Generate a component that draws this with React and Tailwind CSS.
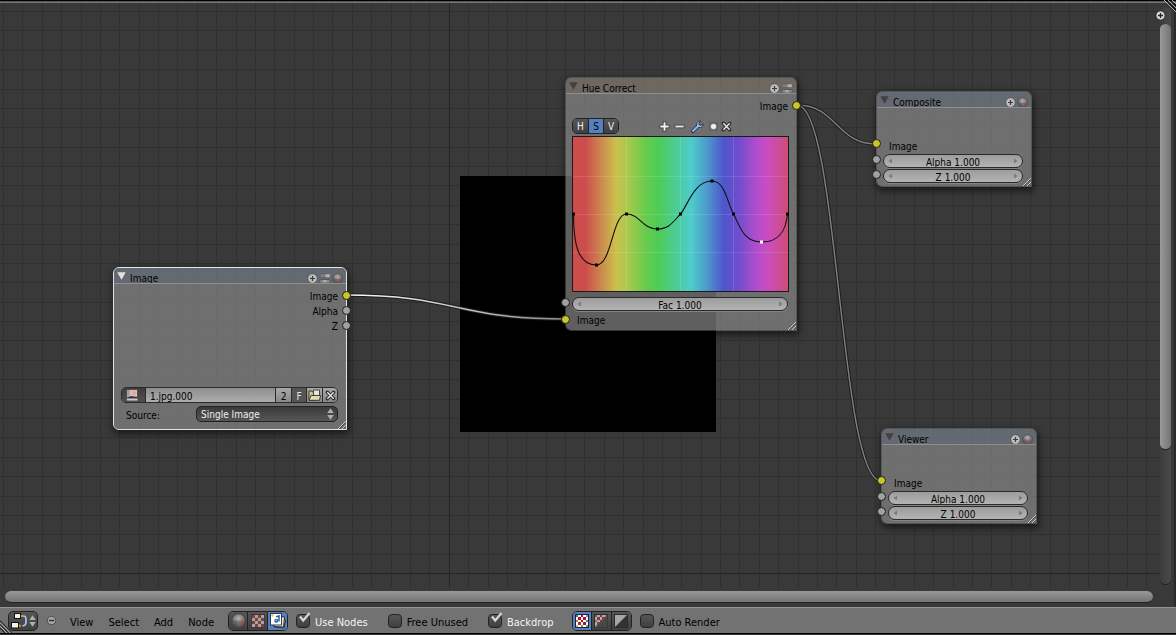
import React, { useState } from 'react';

const STEP = 19.38;

const range = (n) => Array.from({ length: n }, (_, i) => i);

// Background grid of the node canvas
function CanvasGrid() {
  return (
    <svg className="absolute inset-0 w-full h-full" shapeRendering="crispEdges" aria-hidden="true">
      {range(160).map((i) => {
        const x = Math.round(3 + i * STEP);
        return <rect key={i} x={x} y="0" width="1" height="100%" fill={i === 23 ? '#252525' : '#303030'} />;
      })}
      {range(100).map((i) => {
        const y = Math.round(8 + i * STEP);
        return <rect key={i} x="0" y={y} width="100%" height="1" fill={i === 29 ? '#252525' : '#303030'} />;
      })}
    </svg>
  );
}

// Noodle between two sockets
function Link({ from, to, light }) {
  const half = (to[0] - from[0]) / 2;
  const d = `M${from[0]} ${from[1]} C${from[0] + half} ${from[1]} ${to[0] - half} ${to[1]} ${to[0]} ${to[1]}`;
  return (
    <g fill="none">
      <path d={d} stroke="#1c1c1c" strokeWidth="3.4" />
      <path d={d} stroke={light ? 'url(#noodle)' : '#808080'} strokeWidth="1.4" />
    </g>
  );
}

function Links() {
  return (
    <svg className="absolute inset-0 w-full h-full" aria-hidden="true">
      <defs>
        <linearGradient id="noodle">
          <stop offset="0" stopColor="#ffffff" />
          <stop offset="1" stopColor="#8c8c8c" />
        </linearGradient>
      </defs>
      <Link from={[346, 292]} to={[565, 316]} light />
      <Link from={[797, 102]} to={[876, 141]} />
      <Link from={[797, 102]} to={[881, 478]} />
    </svg>
  );
}

/* ---------- icons ---------- */

function PlusCircle() {
  return (
    <svg width="11" height="11" viewBox="0 0 11 11">
      <circle cx="5.5" cy="5.5" r="4.8" fill="#bdbdbd" stroke="#4a4a4a" strokeWidth="0.8" />
      <path d="M5.5 3v5M3 5.5h5" stroke="#3a3a3a" strokeWidth="1.2" />
    </svg>
  );
}

function OptionsIcon() {
  return (
    <svg width="12" height="11" viewBox="0 0 12 11">
      <rect x="1" y="1" width="10" height="3.500" rx="1" fill="#7e7e7e" stroke="#5a5a5a" strokeWidth="0.600" />
      <rect x="6.500" y="1.300" width="4.500" height="3" rx="1" fill="#b0b0b0" />
      <rect x="1" y="6.500" width="10" height="3.500" rx="1" fill="#a8a8a8" stroke="#444" strokeWidth="0.700" />
      <path d="M3 7v2.600M9 7v2.600" stroke="#5c5c5c" />
    </svg>
  );
}

function MaterialBall({ size = 11 }) {
  return (
    <svg width={size} height={size} viewBox="0 0 11 11">
      <defs>
        <radialGradient id="ball" cx="0.5" cy="0.35" r="0.65">
          <stop offset="0" stopColor="#b5b0b0" />
          <stop offset="0.6" stopColor="#7d7878" />
          <stop offset="1" stopColor="#585454" />
        </radialGradient>
      </defs>
      <circle cx="5.5" cy="5.5" r="4.9" fill="url(#ball)" stroke="#464646" strokeWidth="0.7" />
      <path d="M5.800 5.800 10 5.300A4.500 4.500 0 0 1 6.300 9.900Z" fill="#8c4f48" opacity="0.6" />
      <path d="M1 5.200 5.400 5.800 5.200 9.900A4.500 4.500 0 0 1 1 5.200Z" fill="#4d4d4d" opacity="0.5" />
    </svg>
  );
}

function TextureIcon() {
  return (
    <svg width="14" height="14" viewBox="0 0 14 14" shapeRendering="crispEdges">
      <rect width="14" height="14" fill="#3f3a3a" />
      <rect x="1" y="1" width="12" height="12" fill="#aaa3a0" />
      {range(16).map((i) => {
        const col = i % 4;
        const row = Math.floor(i / 4);
        return (col + row) % 2 === 0 ? (
          <rect key={i} x={1 + col * 3} y={1 + row * 3} width="3" height="3" fill="#7b4340" />
        ) : null;
      })}
    </svg>
  );
}

function CompositingIcon() {
  return (
    <svg width="18" height="18" viewBox="0 0 18 18">
      <path d="M7 6.500l9.500 1.500-1.500 8-9.500-1z" fill="#cfcbb4" stroke="#222" strokeWidth="0.9" />
      <path d="M5 4l10.500 1-1 10-9.500-0.500z" fill="#e8e5d2" stroke="#222" strokeWidth="0.9" />
      <rect x="1.500" y="1.500" width="11" height="11.500" fill="#fff" stroke="#1d2a44" strokeWidth="0.9" />
      <circle cx="3.500" cy="3.500" r="1.300" fill="#f5c234" />
      <path d="M10 3v6.500M7 4.500h3" stroke="#2b5ca8" strokeWidth="1.500" fill="none" />
      <circle cx="7.300" cy="8.800" r="2" fill="#2b5ca8" />
      <circle cx="7.300" cy="8.500" r="0.800" fill="#b7d0f5" />
    </svg>
  );
}

function NodeEditorIcon() {
  return (
    <svg width="18" height="17" viewBox="0 0 18 17">
      <path d="M9 4.500h1.500M8 14h2" stroke="#e08a1c" strokeWidth="1.500" />
      <path d="M11 4h1.500q2.500 0 2.500 3v3q0 3.500-3.500 4" fill="none" stroke="#a6c3ee" strokeWidth="1.700" />
      <rect x="3.500" y="1.500" width="6" height="5" fill="#f4f2e8" stroke="#111" />
      <rect x="0.500" y="10.500" width="7" height="5.500" fill="#f4f2e8" stroke="#111" />
      <circle cx="10.800" cy="4" r="1.100" fill="#e9941f" />
      <circle cx="8.800" cy="13.500" r="1.100" fill="#e9941f" />
    </svg>
  );
}

const CHECKS = [
  ['#2f7f96', '#ffffff', '#b01030', '#ffffff', '#8f8fa0'],
  ['#ffffff', '#b01030', '#ffffff', '#b01030', '#ffffff'],
  ['#c9780c', '#ffffff', '#b01030', '#ffffff', '#3d8f8a'],
  ['#ffffff', '#a02848', '#ffffff', '#8c1f3c', '#ffffff'],
  ['#e0b070', '#ffffff', '#b08040', '#ffffff', '#86a818'],
];

// Channel icons: full colour+alpha, colour with diagonal mask, alpha only
function ChannelIcon({ kind }) {
  return (
    <svg width="14" height="14" viewBox="0 0 14 14">
      <rect width="14" height="14" fill={kind === 'rgba' ? '#15243f' : '#2c2c2c'} />
      {kind === 'alpha' ? (
        <>
          <rect x="1" y="1" width="12" height="12" fill="#a6a6a6" />
          <path d="M13 1v12H1z" fill="#333333" />
        </>
      ) : (
        <g shapeRendering="crispEdges">
          <rect x="1" y="1" width="12" height="12" fill="#fff" />
          {CHECKS.map((row, r) =>
            row.map((c, i) => (
              <rect
                key={`${r}-${i}`}
                x={[1, 3, 6, 8, 11][i]}
                y={[1, 3, 6, 8, 11][r]}
                width={i % 2 ? 3 : 2}
                height={r % 2 ? 3 : 2}
                fill={c}
              />
            ))
          )}
        </g>
      )}
      {kind === 'rgb' && (
        <>
          <rect x="1" y="1" width="12" height="12" fill="#606060" opacity="0.5" />
          <path d="M13.500 1v12.500H1z" fill="#484848" />
        </>
      )}
    </svg>
  );
}

function UpDown() {
  return (
    <svg width="7" height="12" viewBox="0 0 7 12">
      <path d="M3.500 0.300 6.700 5H0.300zM3.500 11.700 6.700 7H0.300z" fill="#b0b0b0" />
    </svg>
  );
}

function ImageIcon() {
  return (
    <svg width="12" height="12" viewBox="0 0 12 12">
      <rect x="0.500" y="0.500" width="11" height="11" fill="#d5c0bd" stroke="#3a3a3a" strokeWidth="0.700" />
      <path d="M1 1h3v5.500L1 8z" fill="#a59da3" />
      <circle cx="8" cy="4" r="2.200" fill="#e7a596" />
      <path d="M1 8.500 5 7l6.500 1v2H1z" fill="#3d3336" />
      <path d="M1 9.500h10.500v2H1z" fill="#c5c9dc" />
    </svg>
  );
}

function FolderIcon() {
  return (
    <svg width="13" height="12" viewBox="0 0 13 12">
      <path d="M1 11V2h3l1 1.500h2V11z" fill="#cfc690" stroke="#2f2f2f" strokeWidth="0.900" />
      <path d="M5.500 1h6v6h-6z" fill="#e6e6dd" stroke="#3a3a3a" strokeWidth="0.900" />
      <path d="M1 11.300 3 6.500h9.500l-1 4.800z" fill="#e3dcae" stroke="#2f2f2f" strokeWidth="0.900" />
    </svg>
  );
}

function CrossIcon() {
  return (
    <svg width="11" height="11" viewBox="0 0 12 12">
      <path d="M2.500 2.500l7 7M9.500 2.500l-7 7" stroke="#2b2b2b" strokeWidth="3.600" strokeLinecap="round" />
      <path d="M2.500 2.500l7 7M9.500 2.500l-7 7" stroke="#e6e6e6" strokeWidth="1.600" />
    </svg>
  );
}

function AddIcon() {
  return (
    <svg width="11" height="11" viewBox="0 0 11 11">
      <path d="M5.500 0.500v10M0.500 5.500h10" stroke="#3a3a3a" strokeWidth="3.600" />
      <path d="M5.500 1.300v8.400M1.300 5.500h8.400" stroke="#f0f0f0" strokeWidth="1.900" />
    </svg>
  );
}

function RemoveIcon() {
  return (
    <svg width="11" height="11" viewBox="0 0 11 11">
      <path d="M0.500 5.500h10" stroke="#444" strokeWidth="3.600" />
      <path d="M1.300 5.500h8.400" stroke="#e6e6e6" strokeWidth="1.900" />
    </svg>
  );
}

function WrenchIcon() {
  return (
    <svg width="13" height="13" viewBox="0 0 13 13">
      <path d="M1.800 11.200 7.500 5.500" stroke="#1f2d47" strokeWidth="3.600" strokeLinecap="round" />
      <path d="M9.800 1.200a3.200 3.200 0 1 0 2.300 2.600L10 5.500 7.800 4.600 8 2.600z" fill="#c5d6f2" stroke="#1f2d47" strokeWidth="0.900" />
      <path d="M2 11 7.300 5.700" stroke="#8fb4ec" strokeWidth="2.100" strokeLinecap="round" />
    </svg>
  );
}

function DotIcon() {
  return (
    <svg width="11" height="11" viewBox="0 0 11 11">
      <rect x="1.500" y="1.500" width="8" height="8" fill="none" stroke="#5c5c5c" strokeWidth="0.800" />
      <circle cx="5.500" cy="5.500" r="3.100" fill="#f0f0f0" stroke="#4a4a4a" strokeWidth="0.600" />
    </svg>
  );
}

/* ---------- node parts ---------- */

function Socket({ color = 'grey', side = 'left', field }) {
  return (
    <span
      className={`absolute size-[9px] rounded-full border border-[#1c1c1c] ${field ? 'top-[1px]' : 'top-[3px]'} ${
        side === 'left' ? '-left-[5px]' : '-right-[5px]'
      } ${color === 'yellow' ? 'bg-[#c7c729]' : 'bg-[#a1a1a1]'}`}
    />
  );
}

function Node({ title, className, header, selected, icons, children }) {
  return (
    <section
      aria-label={title}
      className={`absolute flex flex-col rounded-t-md rounded-bl-md border text-[10px] shadow-[1px_3px_7px_1px_rgba(0,0,0,0.55)] ${
        selected ? 'border-[#e4e4e4]' : 'border-[#83838366]'
      } ${className}`}
    >
      <header className={`flex h-[15px] items-center rounded-t-[5px] pl-[3px] pr-[3px] pt-[5px] ${header}`}>
        <button type="button" aria-label="Collapse" className="-mt-1 mr-1">
          <svg width="9" height="8" viewBox="0 0 9 8">
            <path d="M0.300 0.300h8.400L4.500 7.700z" fill={selected ? '#e2e2e2' : '#414141'} />
          </svg>
        </button>
        <h2 className="flex-1">{title}</h2>
        <div className="flex gap-[1px]">{icons}</div>
      </header>
      <div className="relative flex flex-1 flex-col rounded-bl-[5px] border-t border-[#8d8f92] bg-[#848484b8]">
        {children}
        <svg width="9" height="9" viewBox="0 0 9 9" className="absolute bottom-0 right-0" aria-hidden="true">
          <path d="M1 9 9 1M5 9 9 5" stroke="#cfcfcf" strokeWidth="1" />
          <path d="M2.200 9 9 2.200M6.200 9 9 6.200" stroke="#3d3d3d" strokeWidth="0.700" />
        </svg>
      </div>
    </section>
  );
}

// Number field with the little arrows at both ends
function NumberField({ label, initial }) {
  const [value, setValue] = useState(`${label} ${initial}`);
  return (
    <div className="relative flex-1">
      <input
        type="text"
        aria-label={label}
        value={value}
        onChange={(e) => setValue(e.target.value)}
        className="block h-[14px] w-full rounded-full border border-[#2a2a2a] bg-linear-to-b from-[#9c9c9c] to-[#b4b4b4] px-3 pt-[2px] text-center leading-[12px] text-black shadow-[0_1px_0_#858585] outline-none"
      />
      <svg width="4" height="6" viewBox="0 0 4 6" className="absolute left-[5px] top-1 pointer-events-none">
        <path d="M4 0.500v5L0.500 3z" fill="#7a7a7a" />
      </svg>
      <svg width="4" height="6" viewBox="0 0 4 6" className="absolute right-[5px] top-1 pointer-events-none">
        <path d="M0 0.500v5L3.500 3z" fill="#7a7a7a" />
      </svg>
    </div>
  );
}

function OutputNode({ title, className }) {
  return (
    <Node
      title={title}
      className={className}
      header="bg-[#757d88b8]"
      icons={
        <>
          <PlusCircle />
          <MaterialBall />
        </>
      }
    >
      <div className="relative mt-[28px] flex h-[16px] items-center pl-3 pt-[4px]">
        <Socket color="yellow" />
        Image
      </div>
      <div className="relative mt-[2px] flex h-[15px] pl-[6px] pr-[8px]">
        <Socket field />
        <NumberField label="Alpha" initial="1.000" />
      </div>
      <div className="relative mb-[2px] flex h-[15px] pl-[6px] pr-[8px]">
        <Socket field />
        <NumberField label="Z" initial="1.000" />
      </div>
    </Node>
  );
}

function ImageNode() {
  const [name, setName] = useState('1.jpg.000');
  const light = 'flex items-center justify-center border-l border-[#2a2a2a] bg-linear-to-b from-[#a8a8a8] to-[#898989]';
  return (
    <Node
      title="Image"
      selected
      className="left-[113px] top-[264px] w-[234px]"
      header="bg-[#757d88b8]"
      icons={
        <>
          <PlusCircle />
          <OptionsIcon />
          <MaterialBall />
        </>
      }
    >
      <ul className="mb-[54px] mt-[4px] text-right">
        {['Image', 'Alpha', 'Z'].map((s) => (
          <li key={s} className="relative h-[15px] pr-2 leading-[18px]">
            {s}
            <Socket side="right" color={s === 'Image' ? 'yellow' : 'grey'} />
          </li>
        ))}
      </ul>
      <div className="ml-[7px] mr-[8px] flex h-[16px] overflow-hidden rounded-[5px] border border-[#2a2a2a]">
        <button type="button" aria-label="Browse image" className="flex w-[23px] items-center bg-linear-to-b from-[#3c3c3c] to-[#505050] pl-1">
          <ImageIcon />
        </button>
        <input
          type="text"
          aria-label="Image name"
          value={name}
          onChange={(e) => setName(e.target.value)}
          className="min-w-0 flex-1 border-l border-[#2a2a2a] bg-linear-to-b from-[#8e8e8e] to-[#adadad] pl-1 pt-[2px] text-black outline-none"
        />
        <button type="button" className={`w-[16px] pt-[2px] ${light}`}>2</button>
        <button type="button" className="w-[15px] border-l border-[#2a2a2a] bg-[#555555] pt-[2px] text-[#e6e6e6]">F</button>
        <button type="button" aria-label="Open image" className={`w-[16px] ${light}`}>
          <FolderIcon />
        </button>
        <button type="button" aria-label="Unlink" className={`w-[15px] ${light}`}>
          <CrossIcon />
        </button>
      </div>
      <div className="mb-[7px] ml-3 mr-[8px] mt-[3px] flex h-[16px] items-center">
        <label htmlFor="source" className="w-[70px] pt-[2px]">Source:</label>
        <div className="relative flex-1">
          <select
            id="source"
            className="block h-[16px] w-full appearance-none rounded-[5px] border border-[#222222] bg-linear-to-b from-[#3a3a3a] to-[#565656] pl-1 pt-[2px] leading-[12px] text-[#f0f0f0] outline-none"
          >
            <option>Single Image</option>
          </select>
          <span className="pointer-events-none absolute right-[4px] top-[2px]">
            <UpDown />
          </span>
        </div>
      </div>
    </Node>
  );
}

const POINTS = [
  [1.5, 78],
  [24.5, 129],
  [54.5, 78],
  [85.5, 93],
  [108.5, 78],
  [140, 45],
  [161.5, 78],
  [189.5, 106],
  [215.5, 78],
];

function HueCurve() {
  return (
    <svg viewBox="0 0 217 156" className="block w-full">
      <defs>
        <linearGradient id="hue">
          <stop offset="0" stopColor="#cd4d4d" />
          <stop offset="0.060" stopColor="#cd4d4d" />
          <stop offset="0.200" stopColor="#cbbf4d" />
          <stop offset="0.250" stopColor="#adc94d" />
          <stop offset="0.340" stopColor="#66cb4d" />
          <stop offset="0.400" stopColor="#4dcc57" />
          <stop offset="0.480" stopColor="#4dcc96" />
          <stop offset="0.550" stopColor="#4dcdcb" />
          <stop offset="0.630" stopColor="#4d93cc" />
          <stop offset="0.700" stopColor="#4d56cc" />
          <stop offset="0.770" stopColor="#714dcc" />
          <stop offset="0.860" stopColor="#b74dcd" />
          <stop offset="0.910" stopColor="#cb4dbd" />
          <stop offset="1" stopColor="#cd4d74" />
        </linearGradient>
      </defs>
      <rect x="0.500" y="0.500" width="216" height="155" fill="url(#hue)" stroke="#1a1a1a" />
      <path d="M54.500 1v154M108.500 1v154M161.500 1v154M1 40.500h215M1 78.500h215M1 116.500h215" stroke="#ffffff" strokeOpacity="0.120" />
      {/* starts and ends steep, the hue range wraps around */}
      <path
        d="M1.500 78C1.500 108 6 129 24.500 129C40 129 40 78 54.500 78C68 78 70 93 85.500 93C97 93 101 86 108.500 78C116 69 122 45 140 45C153 45 155 66 161.500 78C168 90 171 106 189.500 106C208 106 214 94 215.500 78"
        fill="none"
        stroke="#101010"
        strokeWidth="1.100"
      />
      {POINTS.map(([x, y]) => (
        <rect key={x} x={x - 1.5} y={y - 1.5} width="3" height="3" fill={x === 189.5 ? '#ffffff' : '#000000'} />
      ))}
    </svg>
  );
}

function HueCorrectNode() {
  const [channel, setChannel] = useState('S');
  return (
    <Node
      title="Hue Correct"
      className="left-[565px] top-[74px] w-[232px]"
      header="bg-[#827a6fb8]"
      icons={
        <>
          <PlusCircle />
          <OptionsIcon />
        </>
      }
    >
      <div className="relative mt-[4px] h-[16px] pr-2 text-right leading-[18px]">
        Image
        <Socket side="right" color="yellow" />
      </div>
      <div className="ml-[6px] mt-[4px] flex h-[16px] items-center">
        <div className="flex h-[16px] overflow-hidden rounded-[5px] border border-[#222222]">
          {['H', 'S', 'V'].map((c, i) => (
            <button
              key={c}
              type="button"
              aria-pressed={channel === c}
              onClick={() => setChannel(c)}
              className={`w-[15px] pt-[2px] leading-[12px] ${i > 0 ? 'border-l border-[#222222]' : ''} ${
                channel === c
                  ? 'bg-[#5680c2] text-black'
                  : 'bg-linear-to-b from-[#565656] to-[#404040] text-[#f0f0f0]'
              }`}
            >
              {c}
            </button>
          ))}
        </div>
        <div className="ml-10 flex items-center gap-1">
          <button type="button" aria-label="Zoom in"><AddIcon /></button>
          <button type="button" aria-label="Zoom out"><RemoveIcon /></button>
          <button type="button" aria-label="Tools" className="ml-[2px]"><WrenchIcon /></button>
          <button type="button" aria-label="Clipping"><DotIcon /></button>
          <button type="button" aria-label="Delete point" className="-ml-[2px]"><CrossIcon /></button>
        </div>
      </div>
      <div className="ml-[6px] mr-[7px] mt-[2px]">
        <HueCurve />
      </div>
      <div className="relative mt-[5px] flex h-[15px] pl-[6px] pr-[8px]">
        <Socket field />
        <NumberField label="Fac" initial="1.000" />
      </div>
      <div className="relative mb-[2px] flex h-[16px] items-center pl-[11px]">
        <Socket color="yellow" />
        Image
      </div>
    </Node>
  );
}

/* ---------- bottom header ---------- */

function Check({ label, initial, className }) {
  const [on, setOn] = useState(initial);
  return (
    <label className={`relative flex items-center gap-[5px] ${on ? 'text-[#f4f4f4]' : 'text-black'} ${className}`}>
      <input
        type="checkbox"
        checked={on}
        onChange={() => setOn(!on)}
        className="size-[14px] appearance-none rounded-[4px] border border-[#222222] bg-linear-to-b from-[#565656] to-[#404040]"
      />
      {on && (
        <svg width="13" height="12" viewBox="0 0 13 12" className="pointer-events-none absolute left-[2px] top-0">
          <path d="M2 4.500 5.200 8.500 11.500 1" fill="none" stroke="#d8d8d8" strokeWidth="2.100" />
        </svg>
      )}
      <span className="pt-1">{label}</span>
    </label>
  );
}

function IconGroup({ items, active, className }) {
  const [current, setCurrent] = useState(active);
  return (
    <div className={`flex h-[20px] overflow-hidden rounded-[5px] border border-[#222222] ${className}`}>
      {items.map(([name, icon], i) => (
        <button
          key={name}
          type="button"
          aria-label={name}
          aria-pressed={current === name}
          onClick={() => setCurrent(name)}
          className={`flex items-center justify-center ${i > 0 ? 'w-[20px] border-l border-[#222222]' : 'w-[18px]'} ${
            current === name ? 'bg-[#5680c2]' : 'bg-linear-to-b from-[#565656] to-[#404040]'
          }`}
        >
          {icon}
        </button>
      ))}
    </div>
  );
}

function EditorHeader() {
  return (
    <footer className="relative flex h-[26px] shrink-0 items-center border-t border-[#949494] bg-[#727272] pl-2">
      <svg width="12" height="14" viewBox="0 0 12 14" className="absolute bottom-0 left-0" aria-hidden="true">
        <path d="M0 2 12 14M0 5.500 8.500 14M0 9 5 14" stroke="#262626" strokeWidth="1.200" />
        <path d="M0 3.500 10.500 14M0 7 7 14" stroke="#c4c4c4" strokeWidth="0.900" />
      </svg>
      <button
        type="button"
        aria-label="Editor type"
        className="relative flex h-[20px] w-[30px] items-center justify-between rounded-[5px] border border-[#222222] bg-linear-to-b from-[#565656] to-[#404040] pl-[2px] pr-[1px]"
      >
        <NodeEditorIcon />
        <UpDown />
      </button>
      <button type="button" aria-label="Hide menus" className="ml-2">
        <svg width="11" height="11" viewBox="0 0 11 11">
          <circle cx="5.500" cy="5.500" r="4.200" fill="#a2a2a2" stroke="#4a4a4a" strokeWidth="0.900" />
          <path d="M3 5.500h5" stroke="#2c2c2c" strokeWidth="1.300" />
        </svg>
      </button>
      <nav className="ml-[13px] flex gap-[15px] pt-1">
        {['View', 'Select', 'Add', 'Node'].map((m) => (
          <button key={m} type="button">{m}</button>
        ))}
      </nav>
      <IconGroup
        className="ml-[14px]"
        active="Compositing"
        items={[
          ['Material', <MaterialBall size={15} />],
          ['Texture', <TextureIcon />],
          ['Compositing', <CompositingIcon />],
        ]}
      />
      <Check label="Use Nodes" initial className="ml-[8px]" />
      <Check label="Free Unused" initial={false} className="ml-5" />
      <Check label="Backdrop" initial className="ml-5" />
      <IconGroup
        className="ml-[18px]"
        active="Color and alpha"
        items={[
          ['Color and alpha', <ChannelIcon kind="rgba" />],
          ['Color', <ChannelIcon kind="rgb" />],
          ['Alpha channel', <ChannelIcon kind="alpha" />],
        ]}
      />
      <Check label="Auto Render" initial={false} className="ml-[8px]" />
    </footer>
  );
}

export default function App() {
  return (
    <div className="flex h-screen flex-col overflow-hidden bg-[#393939] font-['DejaVu_Sans_Condensed','DejaVu_Sans',sans-serif] text-[11px] leading-[13px] text-black">
      <div className="h-[3px] shrink-0 border-b border-t border-b-[#777777] border-t-black bg-[#555555]" />
      <div className="flex min-h-0 flex-1">
        <div className="flex min-w-0 flex-1 flex-col">
          <main className="relative min-h-0 flex-1 overflow-hidden">
            <CanvasGrid />
            <div className="absolute left-[460px] top-[173px] size-[256px] bg-black" />
            <Links />
            <ImageNode />
            <HueCorrectNode />
            <OutputNode title="Composite" className="left-[876px] top-[88px] w-[156px]" />
            <OutputNode title="Viewer" className="left-[881px] top-[425px] w-[156px]" />
          </main>
          {/* horizontal scroll bar */}
          <div className="flex h-[19px] shrink-0 items-start pl-[5px] pr-[6px] pt-[3px]">
            <div className="h-[12px] flex-1 rounded-full border-b border-[#222222] bg-linear-to-b from-[#999999] to-[#747474]" />
          </div>
        </div>
        {/* vertical scroll bar */}
        <div className="relative flex w-[17px] shrink-0 flex-col border-r-2 border-[#2a2a2a] pb-[22px] pl-[1px] pr-[3px] pt-[4px]">
          <div className="flex flex-1 flex-col rounded-full border-b border-[#222222] bg-linear-to-r from-[#3c3c3c] to-[#4a4a4a] pt-[17px]">
            <div className="h-[76%] rounded-full border-b border-[#222222] bg-linear-to-r from-[#999999] to-[#747474]" />
          </div>
          <button type="button" aria-label="Show properties" className="absolute -left-[4px] top-[7px]">
            <svg width="11" height="11" viewBox="0 0 11 11">
              <circle cx="5.500" cy="5.500" r="4.400" fill="#dcdcdc" stroke="#222" strokeWidth="0.600" />
              <path d="M5.500 3v5M3 5.500h5" stroke="#222" strokeWidth="1.300" />
            </svg>
          </button>
          <svg width="13" height="13" viewBox="0 0 13 13" className="absolute -right-[2px] -top-[3px]" aria-hidden="true">
            <path d="M1 0 13 12M5 0l8 8M9 0l4 4" stroke="#b8b8b8" strokeWidth="0.900" />
            <path d="M3 0 13 10M7 0l6 6" stroke="#111" strokeWidth="1.200" />
          </svg>
        </div>
      </div>
      <EditorHeader />
      <div className="h-[2px] shrink-0 border-t border-black bg-[#333333]" />
    </div>
  );
}
